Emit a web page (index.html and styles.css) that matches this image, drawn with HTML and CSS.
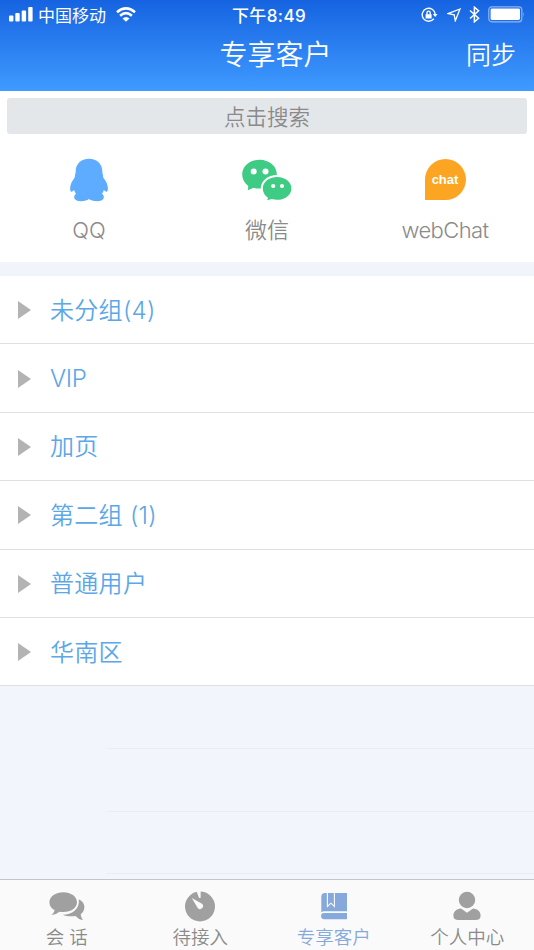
FILE: index.html
```html
<!DOCTYPE html>
<html lang="zh-CN">
<head>
    <meta charset="UTF-8">
    <meta name="viewport" content="width=device-width, initial-scale=1.0">
    <title>专享客户</title>
    <link rel="stylesheet" href="styles.css">
</head>
<body>
    <header class="header">
        <div class="status-bar">
            <div class="status-left">
                <svg class="signal" width="24" height="15" viewBox="0 0 24 15" fill="#fff">
                    <rect x="0" y="8.5" width="4.4" height="6" rx="1"/>
                    <rect x="6.3" y="6" width="4.4" height="8.5" rx="1"/>
                    <rect x="12.7" y="3.5" width="4.4" height="11" rx="1"/>
                    <rect x="19.2" y="0" width="4.4" height="14.5" rx="1"/>
                </svg>
                <span class="carrier">中国移动</span>
                <svg width="20" height="15" viewBox="0 0 20 15" fill="none" stroke="#fff" stroke-width="2.6">
                    <path d="M1 5.2Q10 -2.4 19 5.2"/>
                    <path d="M4.1 8.8Q10 3.6 15.9 8.8"/>
                    <path d="M10 14.8L6.5 11.4Q10 8.4 13.5 11.4Z" fill="#fff" stroke="none"/>
                </svg>
            </div>
            <span class="time">下午8:49</span>
            <div class="status-right">
                <svg width="17" height="16" viewBox="0 0 17 16" fill="none" stroke="#fff" stroke-width="1.4">
                    <path d="M12.8 11.8A6.5 6.5 0 1 1 14.2 7.2"/>
                    <path d="M11.8 7h4.7l-2.3 3z" fill="#fff" stroke="none"/>
                    <rect x="4.6" y="7.2" width="6" height="4.3" fill="#fff" stroke="none"/>
                    <path d="M6 7.5V5.7a1.6 1.6 0 0 1 3.2 0v1.8"/>
                </svg>
                <svg class="location" width="14" height="14" viewBox="0 0 14 14" fill="none" stroke="#fff" stroke-width="1.3">
                    <path d="M13 1L1 5.6L7.2 6.8L8.3 12.8Z"/>
                </svg>
                <svg class="bluetooth" width="11" height="17" viewBox="0 0 11 17" fill="none" stroke="#fff" stroke-width="1.5">
                    <path d="M1 4.5L9.6 12.2L5.4 15.8V1.2L9.6 4.8L1 12.5"/>
                </svg>
                <svg width="38" height="17" viewBox="0 0 38 17">
                    <rect x="0.8" y="0.8" width="33" height="15" rx="3" fill="none" stroke="#8fb4f8" stroke-width="1.2"/>
                    <rect x="2.6" y="2.6" width="29.4" height="11.4" rx="1.4" fill="#fff"/>
                    <path d="M35.3 6q1.8 2.4 0 5z" fill="#8fb4f8"/>
                </svg>
            </div>
        </div>
        <div class="nav">
            <h1>专享客户</h1>
            <a class="sync">同步</a>
        </div>
    </header>

    <div class="search">点击搜索</div>

    <div class="channels">
        <div class="channel">
            <svg width="40" height="44" viewBox="0 0 40 44" fill="#5eacff">
                <path d="M20 .7C12 .7 6.7 6 6.7 13.3C6.7 15 6.2 16 6 17.6C5.8 18.8 6 19 5.4 20C2.6 23.8 1.1 27 1.1 30.5C1.1 33 2 34.5 3.2 33.5C4 33 4.7 32.3 5.2 32C5.4 33.5 6.2 34.8 7.2 35.8C5.5 36.8 5 38.3 5.2 39.8C5.6 42 8 43.2 12 43.2C15.7 43.2 18.2 42.3 20 41C21.8 42.3 24.3 43.2 28 43.2C32 43.2 34.4 42 34.8 39.8C35 38.3 34.5 36.8 32.8 35.8C33.8 34.8 34.6 33.5 34.8 32C35.3 32.3 36 33 36.8 33.5C38 34.5 38.9 33 38.9 30.5C38.9 27 37.4 23.8 34.6 20C34 19 34.2 18.8 34 17.6C33.8 16 33.3 15 33.3 13.3C33.3 6 28 .7 20 .7Z"/>
            </svg>
            <span>QQ</span>
        </div>
        <div class="channel">
            <svg width="50" height="44" viewBox="0 0 50 44" fill="#3ecb83">
                <path d="M17.6 1.8C8 1.8 .2 8.2 .2 16.5C.2 21 2.4 25.1 6.2 27.9L6 32.3L11.6 29.8C13.6 30.4 15.6 30.7 17.6 30.6C27.2 30.6 34.8 24.9 34.8 16.3C34.8 8.2 27.2 1.8 17.6 1.8Z"/>
                <path d="M35.2 19.1C27 19.1 20.8 24.1 20.8 30.5C20.8 34.5 22.8 37.7 26 39.7L25.2 42.2L29.6 41C31.4 41.6 33.2 41.8 35.2 41.8C43.2 41.8 49.4 36.8 49.4 30.4C49.4 24.1 43.2 19.1 35.2 19.1Z" stroke="#fff" stroke-width="4" paint-order="stroke"/>
                <g fill="#fff">
                    <circle cx="11.7" cy="13.4" r="3"/>
                    <circle cx="23.5" cy="13.4" r="3"/>
                    <circle cx="31.2" cy="28" r="2.1"/>
                    <circle cx="40" cy="28" r="2.1"/>
                </g>
            </svg>
            <span>微信</span>
        </div>
        <div class="channel">
            <div class="chat-bubble">chat</div>
            <span class="web-chat">webChat</span>
        </div>
    </div>

    <ul class="groups">
        <li><span>未分组(4)</span></li>
        <li><span class="latin">VIP</span></li>
        <li><span>加页</span></li>
        <li><span>第二组 (1)</span></li>
        <li><span>普通用户</span></li>
        <li><span>华南区</span></li>
    </ul>

    <div class="empty">
        <div class="empty-row"></div>
        <div class="empty-row"></div>
        <div class="empty-row"></div>
    </div>

    <nav class="tab-bar">
        <a class="tab">
            <svg width="36" height="31" viewBox="0 0 36 31" fill="#a0a0a0">
                <path d="M29.8 8.2C33.4 9.8 35.4 12.8 35.4 16C35.4 19 34.2 21.3 31.7 23.2Q31.7 26.2 34 29.2Q29.5 28.5 26.5 25C22 25.7 17.5 25.5 13.8 23.7C22.8 23.7 31 18.2 29.8 8.2Z"/>
                <path d="M14.3 1.2C6.7 1.2 .4 5.5 .4 11.2C.4 14.8 2.4 17.4 5.7 19.2Q5 21.8 2.4 24Q7.2 23.7 10.5 20.7C20.5 22.2 28 17.5 28 11.2C28 5.5 21.8 1.2 14.3 1.2Z"/>
            </svg>
            <span>会 话</span>
        </a>
        <a class="tab">
            <svg width="32" height="31" viewBox="0 0 32 31">
                <circle cx="16" cy="15.5" r="15" fill="#a0a0a0"/>
                <path d="M12.4 0H16.6V6.8Q15.6 7.6 14.9 6.4Z" fill="#fafafa"/>
                <path d="M7.8 7.1L18.3 13.1A3 3 0 1 1 13.7 17Z" fill="#fafafa"/>
            </svg>
            <span>待接入</span>
        </a>
        <a class="tab active">
            <svg width="28" height="31" viewBox="0 0 28 31">
                <path d="M5 2.1H27V20.3H4Q2.4 20.3 1.3 21.4V6Q1.3 2.1 5 2.1Z" fill="#86a9dc"/>
                <path d="M27 21.9H4.2A3.1 3.1 0 0 0 4.2 28.2H27Z" fill="#86a9dc"/>
                <path d="M7.4 2V15.4L10.9 12.2L14.4 15.4V2" fill="none" stroke="#fafafa" stroke-width="1.1"/>
            </svg>
            <span>专享客户</span>
        </a>
        <a class="tab">
            <svg width="28" height="31" viewBox="0 0 28 31" fill="#a0a0a0">
                <circle cx="14" cy="9" r="8.2"/>
                <path d="M8 17.6L14 21.8L20 17.6C24.5 18.2 27.6 20.4 27.6 24.4Q27.6 29 22.5 29H5.5Q.4 29 .4 24.4C.4 20.4 3.5 18.2 8 17.6Z"/>
            </svg>
            <span>个人中心</span>
        </a>
    </nav>
</body>
</html>
```
FILE: styles.css
```css
* {
    box-sizing: border-box;
}
body {
    display: flex;
    flex-direction: column;
    height: 950px;
    margin: 0;
    overflow: hidden;
    font-family: Inter, "Noto Sans CJK SC", sans-serif;
    font-weight: 350;
    background-color: #fff;
    color: #8a8a8a;
}
svg {
    display: block;
    flex: none;
}
.header {
    flex: none;
    height: 91px;
    background: linear-gradient(#1663e1, #3f9bff);
    color: #fff;
}
.status-bar {
    display: grid;
    grid-template-columns: 1fr auto 1fr;
    align-items: center;
    height: 29px;
    padding: 0 8px 0 9px;
    font-size: 17px;
    font-weight: 400;
}
.status-left,
.status-right {
    display: flex;
    align-items: center;
}
.status-right {
    justify-content: flex-end;
}
.carrier {
    margin: 0 10px 0 5px;
}
.time {
    margin-left: 3px;
    font-weight: 500;
    letter-spacing: 0.4px;
}
.location {
    margin-left: 9px;
}
.bluetooth {
    margin: 0 8px 0 8px;
}
.nav {
    display: grid;
    grid-template-columns: 1fr auto 1fr;
    align-items: center;
    height: 48px;
    padding: 0 18px;
}
.nav h1 {
    grid-column: 2;
    margin: 0 0 0 17px;
    font-size: 28px;
    font-weight: 350;
}
.sync {
    justify-self: end;
    font-size: 25px;
}
.search {
    flex: none;
    height: 36px;
    margin: 7px 7px 0;
    border-radius: 3px;
    background-color: #e4e7ea;
    font-size: 21.5px;
    line-height: 39px;
    text-align: center;
}
.channels {
    display: flex;
    flex: none;
    height: 128px;
    padding-top: 24px;
}
.channel {
    display: flex;
    flex: 1;
    flex-direction: column;
    align-items: center;
    font-size: 22px;
}
.channel span {
    margin-top: 12px;
    line-height: 32px;
}
.channel .web-chat {
    letter-spacing: -0.6px;
}
.chat-bubble {
    width: 41px;
    height: 41px;
    margin: 1px 0 2px;
    border-radius: 50% 50% 50% 0;
    background-color: #fca522;
    font: bold 13px/41px "Liberation Sans", sans-serif;
    text-align: center;
    color: #fff;
}
.groups {
    flex: none;
    margin: 0;
    padding: 0;
    border-top: 14px solid #f1f5fb;
    list-style: none;
}
.groups li {
    display: flex;
    align-items: center;
    height: 68.4px;
    padding: 1px 0 0 18px;
    border-bottom: 1.5px solid #dedfe4;
    font-size: 24px;
    color: #5ca7e8;
}
.groups li::before {
    content: "";
    margin-right: 19px;
    border-left: 13px solid #b3b3b3;
    border-top: 9px solid transparent;
    border-bottom: 9px solid transparent;
}
.groups span {
    padding-bottom: 4px;
    letter-spacing: 0.3px;
}
.groups .latin {
    padding-bottom: 1px;
    letter-spacing: -0.3px;
}
.empty {
    flex: 1;
    background-color: #f2f6fc;
}
.empty-row {
    height: 62.7px;
    margin-left: 107px;
    border-bottom: 1px solid #e9edf5;
}
.tab-bar {
    display: flex;
    flex: none;
    height: 71px;
    padding-top: 11px;
    border-top: 1px solid #c3c5ce;
    background-color: #fafafa;
}
.tab {
    display: flex;
    flex: 1;
    flex-direction: column;
    align-items: center;
    font-size: 18.5px;
}
.tab span {
    line-height: 31px;
}
.tab.active {
    color: #86a9dc;
}
```
